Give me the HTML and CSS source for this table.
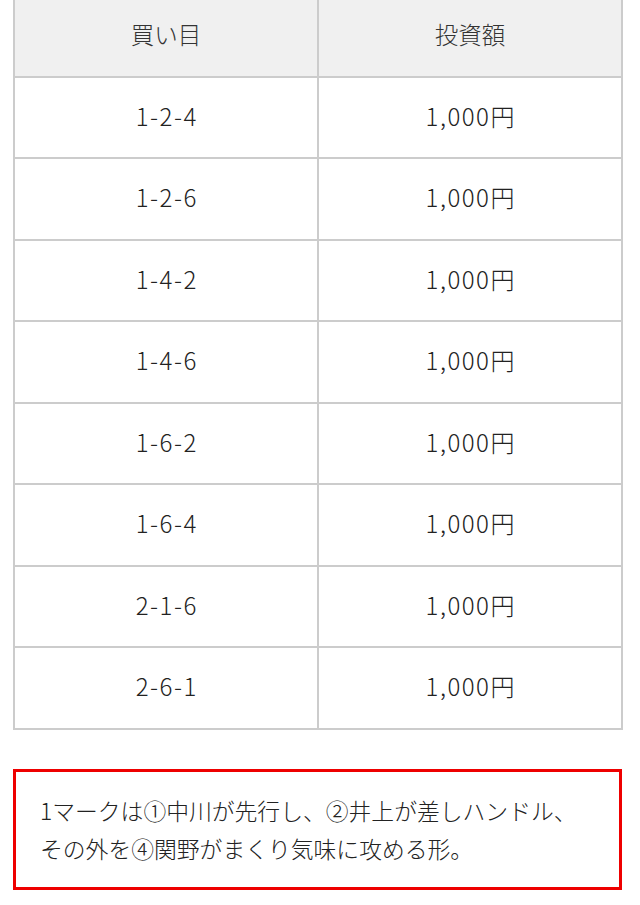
FILE: index.html
```html
<!DOCTYPE html>
<html lang="ja">
<head>
<meta charset="utf-8">
<title>買い目</title>
<link rel="stylesheet" href="styles.css">
</head>
<body>
<div class="page">
  <table class="bets">
    <thead>
      <tr><th>買い目</th><th>投資額</th></tr>
    </thead>
    <tbody>
      <tr><td class="num">1-2-4</td><td class="num">1,000円</td></tr>
      <tr><td class="num">1-2-6</td><td class="num">1,000円</td></tr>
      <tr><td class="num">1-4-2</td><td class="num">1,000円</td></tr>
      <tr><td class="num">1-4-6</td><td class="num">1,000円</td></tr>
      <tr><td class="num">1-6-2</td><td class="num">1,000円</td></tr>
      <tr><td class="num">1-6-4</td><td class="num">1,000円</td></tr>
      <tr><td class="num">2-1-6</td><td class="num">1,000円</td></tr>
      <tr><td class="num">2-6-1</td><td class="num">1,000円</td></tr>
    </tbody>
  </table>
  <div class="note">
    <p>1マークは①中川が先行し、②井上が差しハンドル、<br>その外を④関野がまくり気味に攻める形。</p>
  </div>
</div>
</body>
</html>
```
FILE: styles.css
```css
html, body {
  margin: 0;
  padding: 0;
  background: #ffffff;
}
body {
  font-family: "Noto Sans CJK JP", "Noto Sans", sans-serif;
  font-weight: 300;
  color: #222222;
}
.page {
  padding-left: 13px;
  width: 610px;
}
.bets {
  width: 610px;
  border-collapse: collapse;
  table-layout: fixed;
  margin-top: -6px;
  border: 2px solid #cccccc;
}
.bets th,
.bets td {
  border: 2px solid #cccccc;
  height: 76.5px;
  padding: 0 0 3px 0;
  text-align: center;
  vertical-align: middle;
  font-size: 23px;
  font-weight: 300;
  color: #222222;
  line-height: 1;
}
.bets th {
  background: #f0f0f0;
  color: #333333;
  font-size: 23.5px;
}
.bets td.num {
  font-size: 24px;
  letter-spacing: 1.5px;
  padding-left: 1.5px;
}
.note {
  margin-top: 39px;
  width: 609px;
  box-sizing: border-box;
  border: 3px solid #ee0000;
  padding: 20px 12px 19px 24px;
}
.note p {
  margin: 0;
  font-size: 22.8px;
  line-height: 38px;
  color: #222222;
}
```
